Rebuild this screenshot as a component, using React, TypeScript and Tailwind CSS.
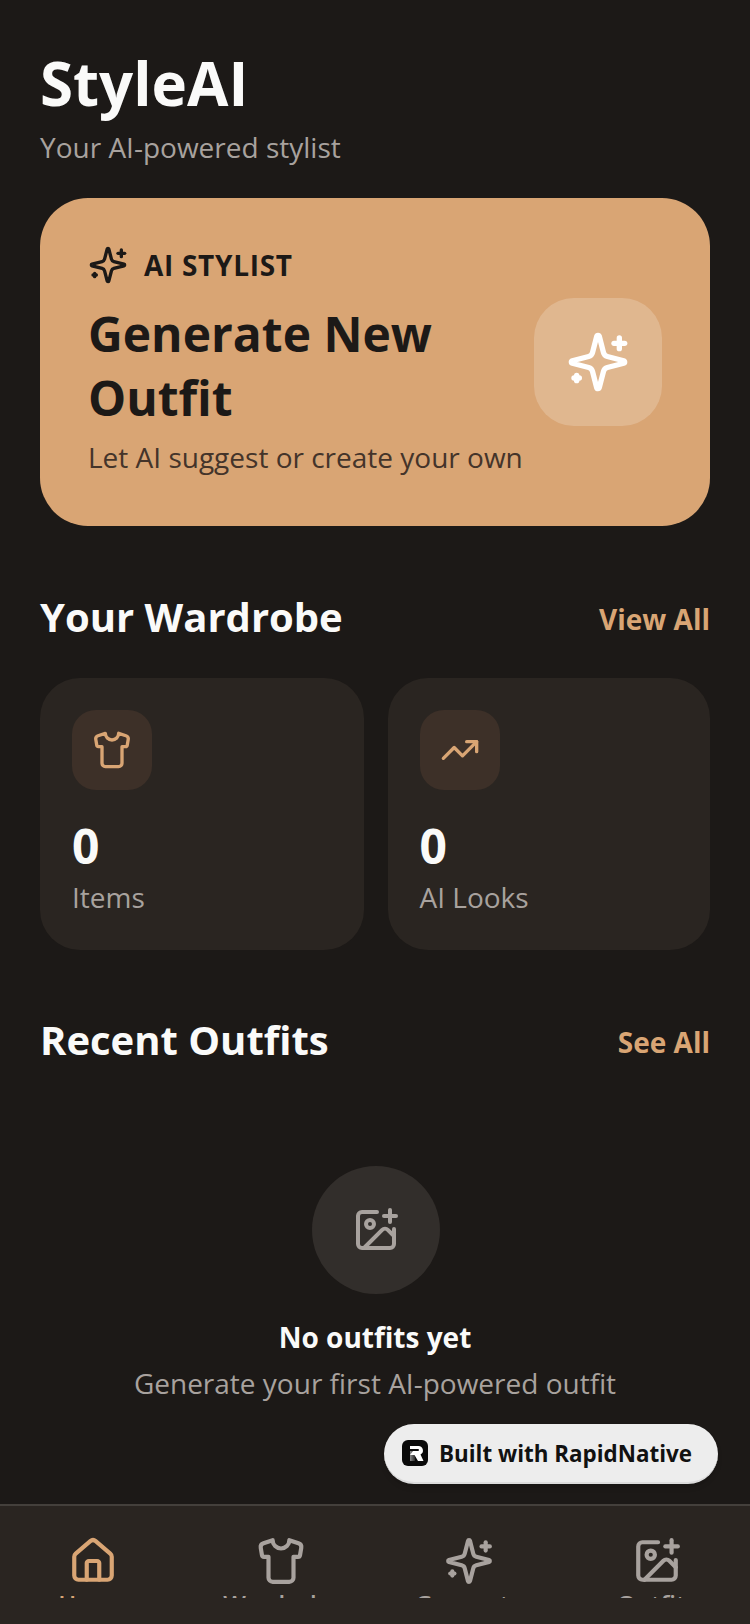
import { House, ImagePlus, Shirt, TrendingUp } from 'lucide-react'

// lucide's current Sparkles has a ring in the corner, the picture has the older small cross
function Sparkles({ size = 24, className = '' }: { size?: number; className?: string }) {
  return (
    <svg
      width={size}
      height={size}
      viewBox="0 0 24 24"
      fill="none"
      stroke="currentColor"
      strokeWidth="2"
      strokeLinecap="round"
      strokeLinejoin="round"
      className={`shrink-0 ${className}`}
    >
      <path d="M9.937 15.5A2 2 0 0 0 8.5 14.063l-6.135-1.582a.5.5 0 0 1 0-.962L8.5 9.936A2 2 0 0 0 9.937 8.5l1.582-6.135a.5.5 0 0 1 .963 0L14.063 8.5A2 2 0 0 0 15.5 9.937l6.135 1.581a.5.5 0 0 1 0 .964L15.5 14.063a2 2 0 0 0-1.437 1.437l-1.582 6.135a.5.5 0 0 1-.963 0z" />
      <path d="M20 3v4" />
      <path d="M22 5h-4" />
      <path d="M4 17v2" />
      <path d="M5 18H3" />
    </svg>
  )
}

const tabs = [
  { label: 'Home', icon: House, active: true },
  { label: 'Wardrobe', icon: Shirt, active: false },
  { label: 'Generate', icon: Sparkles, active: false },
  { label: 'Outfits', icon: ImagePlus, active: false },
]

function SectionHeader({ title, action }: { title: string; action: string }) {
  return (
    <div className="flex items-center justify-between">
      <h2 className="text-[40px] leading-[56px] font-bold text-[#fafaf9]">{title}</h2>
      <span className="pt-1 text-[28px] leading-[40px] font-bold text-[#d9a574]">{action}</span>
    </div>
  )
}

function StatCard({ icon: Icon, value, label }: { icon: typeof Shirt; value: string; label: string }) {
  return (
    <div className="rounded-[40px] bg-[#2a2521] px-8 pt-8 pb-[33px]">
      <div className="flex h-20 w-20 items-center justify-center rounded-3xl bg-[#3d3028]">
        <Icon size={40} strokeWidth={2} className="text-[#d9a574]" />
      </div>
      <div className="mt-[26px] text-[48px] leading-[60px] font-bold text-[#fafaf9]">{value}</div>
      <div className="mt-[1px] text-[28px] leading-[40px] text-[#a8a29e]">{label}</div>
    </div>
  )
}

export default function App() {
  return (
    <div className="relative flex h-[1624px] w-[750px] flex-col overflow-hidden bg-[#1c1917] font-['Open_Sans',sans-serif]">
      <main className="flex-1 px-10">
        <header className="pt-[47px]">
          <h1 className="text-[60px] leading-[72px] font-bold text-[#fafaf9]">StyleAI</h1>
          <p className="mt-2 text-[28px] leading-[40px] text-[#a8a29e]">Your AI-powered stylist</p>
        </header>

        <section className="mt-[31px] flex items-center justify-between rounded-[48px] bg-[#d9a574] p-12">
          <div>
            <div className="-mt-[1px] flex items-center gap-4">
              <Sparkles size={40} className="text-[#1c1917]" />
              <span className="text-[28px] leading-[40px] font-bold tracking-[0.7px] text-[#1c1917]">AI STYLIST</span>
            </div>
            <h2 className="mt-[17px] w-[400px] text-[48px] leading-[64px] font-bold text-[#1c1917]">Generate New Outfit</h2>
            <p className="mt-[7px] mb-[1px] text-[28px] leading-[40px] text-[#44342a]">Let AI suggest or create your own</p>
          </div>
          <div className="flex h-32 w-32 items-center justify-center rounded-[40px] bg-white/20">
            <Sparkles size={64} className="text-white" />
          </div>
        </section>

        <section className="mt-[63px]">
          <SectionHeader title="Your Wardrobe" action="View All" />
          <div className="mt-[33px] grid grid-cols-[323.5px_1fr] gap-6">
            <StatCard icon={Shirt} value="0" label="Items" />
            <StatCard icon={TrendingUp} value="0" label="AI Looks" />
          </div>
        </section>

        <section className="mt-[62px]">
          <SectionHeader title="Recent Outfits" action="See All" />
          <div className="mt-[98px] flex flex-col items-center">
            <div className="ml-[2px] flex h-32 w-32 items-center justify-center rounded-full bg-[#322e2b]">
              <ImagePlus size={48} strokeWidth={2} className="text-[#a8a29e]" />
            </div>
            <p className="mt-[23px] text-[28px] leading-[40px] font-bold text-[#fafaf9]">No outfits yet</p>
            <p className="mt-[2px] text-[28px] leading-[48px] text-[#a8a29e]">Generate your first AI-powered outfit</p>
          </div>
        </section>
      </main>

      <nav className="-mx-[1px] flex h-[120px] border-t-2 border-[#44403c] bg-[#2a2521]">
        {tabs.map(({ label, icon: Icon, active }) => (
          <div key={label} className="flex h-[92px] flex-1 flex-col items-center overflow-hidden pt-[30px]">
            <Icon size={50} strokeWidth={2} className={`shrink-0 ${active ? 'text-[#d9a574]' : 'text-[#a8a29e]'}`} />
            <span className={`mt-[2px] text-[24px] leading-[32px] font-semibold ${active ? 'text-[#d9a574]' : 'text-[#a8a29e]'}`}>{label}</span>
          </div>
        ))}
      </nav>

      <div className="absolute top-[1424px] left-[384px] flex h-[60px] w-[334px] items-center gap-[11px] rounded-full border-b-2 border-[#dcdcdc] bg-[#ededed] pl-[18px] shadow-md">
        <svg width="26" height="26" viewBox="0 0 26 26" className="shrink-0">
          <defs>
            <linearGradient id="rn-stem" x1="0" y1="0" x2="1" y2="0">
              <stop offset="0" stopColor="#8a8a8a" />
              <stop offset="1" stopColor="#2a2a2a" />
            </linearGradient>
          </defs>
          <rect width="26" height="26" rx="6" fill="#0a0a0a" />
          <path d="M8 11h5v10H8z" fill="url(#rn-stem)" />
          <path d="M8 6h8.5a4.5 4.5 0 0 1 2 8.5L21.5 21h-5.5l-3.5-6H8l3-4h5a1 1 0 0 0 0-2H8z" fill="#fff" />
        </svg>
        <span className="pt-[1px] text-[22.4px] leading-[32px] font-bold text-[#111]">Built with RapidNative</span>
      </div>
    </div>
  )
}
